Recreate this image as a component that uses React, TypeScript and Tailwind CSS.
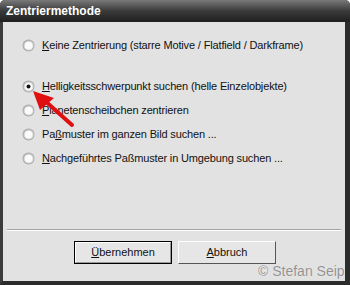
import React from "react";

const font = { fontFamily: '"Liberation Sans", Arial, sans-serif' };

function Radio({ checked }: { checked?: boolean }) {
  return (
    <svg width="13" height="13" viewBox="0 0 13 13" className="shrink-0">
      <defs>
        <linearGradient id={checked ? "rgc" : "rg"} x1="0" y1="0" x2="1" y2="1">
          <stop offset="0" stopColor="#bdbdbd" />
          <stop offset="1" stopColor="#f2f2f2" />
        </linearGradient>
      </defs>
      <circle cx="6.5" cy="6.5" r="6" fill="#a9a9a9" />
      <circle cx="6.5" cy="6.5" r="5" fill={`url(#${checked ? "rgc" : "rg"})`} />
      <circle cx="6.5" cy="6.5" r="3.8" fill="#fbfbfb" />
      {checked && <circle cx="6.5" cy="6.5" r="2" fill="#111" />}
    </svg>
  );
}

function Row({ checked, children, className }: { checked?: boolean; children: React.ReactNode; className?: string }) {
  return (
    <div className={`flex items-center h-[16px] pl-[19px] gap-[7px] ${className ?? ""}`}>
      <Radio checked={checked} />
      <span className="text-[11px] tracking-[-0.15px] text-[#111] whitespace-nowrap leading-none">{children}</span>
    </div>
  );
}

export default function App() {
  return (
    <div className="w-[350px] h-[285px] bg-white relative overflow-hidden" style={font}>
      <div className="flex flex-col h-full rounded-t-[5px] overflow-hidden bg-[#2a2a2a]">
        <div className="h-[22px] shrink-0 bg-gradient-to-b from-[#7a7a7a] via-[#3a3a3a] to-[#1f1f1f] flex items-center pl-[6px]">
          <span className="text-white font-bold text-[12px] leading-none">Zentriermethode</span>
        </div>
        <div className="flex-1 flex flex-col bg-[#e2e2e2] border-l-[3px] border-r-[5px] border-b-[4px] border-l-[#3c3c3c] border-r-[#2c2c2c] border-b-[#2c2c2c]">
          <div className="pt-[15px]">
            <Row>
              <u>K</u>eine Zentrierung (starre Motive / Flatfield / Darkframe)
            </Row>
            <Row checked className="mt-[25px]">
              <u>H</u>elligkeitsschwerpunkt suchen (helle Einzelobjekte)
            </Row>
            <Row className="mt-[8px]">
              <u>P</u>lanetenscheibchen zentrieren
            </Row>
            <Row className="mt-[8px]">
              Pa<u>ß</u>muster im ganzen Bild suchen ...
            </Row>
            <Row className="mt-[8px]">
              <u>N</u>achgeführtes Paßmuster in Umgebung suchen ...
            </Row>
          </div>
          <div className="mt-[63px] mx-[4px] h-[2px] border-t border-t-[#a5a5a5] border-b border-b-white" />
          <div className="mt-[10px] flex pl-[71px] gap-[6px]">
            <div className="w-[98px] h-[23px] border border-black bg-[#e6e6e6] flex items-center justify-center">
              <div className="w-full h-full border-t border-l border-t-white border-l-white border-b border-r border-b-[#9a9a9a] border-r-[#9a9a9a] flex items-center justify-center text-[11px] text-[#111]">
                <span><u>Ü</u>bernehmen</span>
              </div>
            </div>
            <div className="w-[98px] h-[23px] border-t border-l border-t-white border-l-white border-b border-r border-b-[#555] border-r-[#555] bg-[#e6e6e6] flex items-center justify-center text-[11px] text-[#111]">
              <span><u>A</u>bbruch</span>
            </div>
          </div>
        </div>
      </div>
      <div
        className="absolute left-[258px] top-[264px] text-[14px] leading-none text-[#8a8a8a] opacity-90 whitespace-nowrap"
        style={{ fontFamily: '"Liberation Sans", Arial, sans-serif', textShadow: "0 0 1px #fff" }}
      >
        © Stefan Seip
      </div>
      <svg className="absolute left-0 top-0" width="350" height="285" viewBox="0 0 350 285">
        <line x1="72" y1="125" x2="44" y2="100" stroke="#e01010" strokeWidth="4" strokeLinecap="round" />
        <polygon points="33,91 54,98 40,110" fill="#e01010" />
      </svg>
    </div>
  );
}
